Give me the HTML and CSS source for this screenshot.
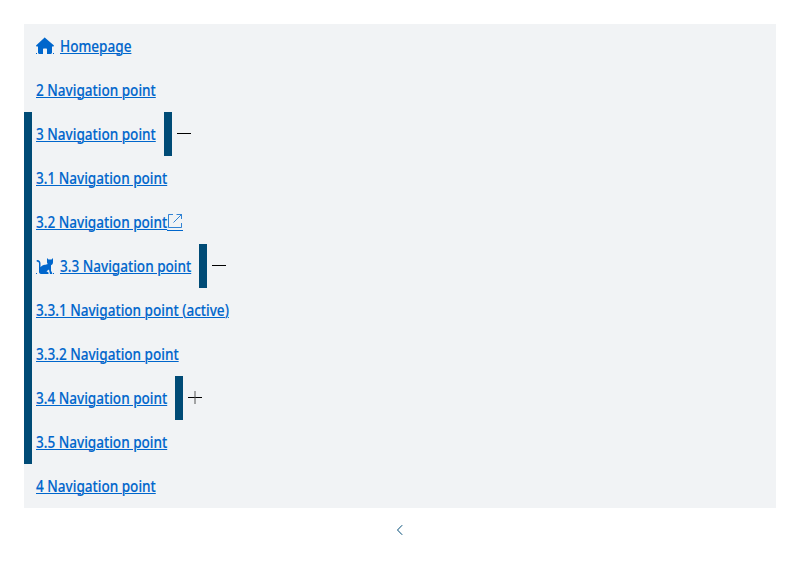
FILE: index.html
```html
<!DOCTYPE html>
<html lang="en">
<head>
<meta charset="utf-8">
<title>Navigation</title>
<link rel="stylesheet" href="styles.css">
</head>
<body>
<nav>
<ul class="tree">
<li><div class="row"><a href="#"><span class="icon"><svg width="18" height="18" viewBox="0 0 18 18"><path fill="currentColor" d="M9 .7 17.700 8.300c.5.5.2 1.100-.4 1.100H16v6.200c0 .8-.5 1.300-1.300 1.300H11v-4.400c0-.6-.4-1-1-1H8c-.6 0-1 .4-1 1v4.400H3.300c-.8 0-1.300-.5-1.300-1.300V9.400H.7c-.6 0-.9-.6-.4-1.100L8.100 1c.5-.4.900-.5 1-.3zM0 16h1v1H0zM17 16h1v1h-1z"/></svg></span><span class="label">Homepage</span></a></div></li>
<li><div class="row"><a href="#"><span class="label">2 Navigation point</span></a></div></li>
<li class="open">
<div class="row"><a href="#"><span class="label">3 Navigation point</span></a><button class="toggle" aria-label="Collapse"><svg width="14" height="14"><path d="M0 6.500h14"/></svg></button></div>
<ul class="nested">
<li><div class="row"><a href="#"><span class="label">3.1 Navigation point</span></a></div></li>
<li><div class="row"><a href="#"><span class="label">3.2 Navigation point</span><span class="external"><svg width="16" height="16" viewBox="0 0 16 16"><path fill="none" stroke="currentColor" stroke-width=".8" d="M6 .5H1.500v13h13V9M9.500.5h5V5M14.500.5 6.500 8.500"/></svg></span></a></div></li>
<li>
<div class="row"><a href="#"><span class="icon"><svg width="18" height="18" viewBox="0 0 18 18"><path fill="currentColor" d="M11 1 12.500 2.500h3L17 1v4.200c0 1.500-.8 2.600-2 3v5.500l1.200 2.300v1h-2.200l-1-4.500-2.500 1.800 2 1.200V17H4.800C3.300 16.700 2.800 15.500 3 14V6.500C3 5.300 2.500 4.800 1.300 4.700c-1 0-1-1.700 0-1.700C3.400 3 4.500 4.300 4.500 6.300v3.900C5.700 8.500 7.500 7.600 9.500 7.800l2.300-.8C11.200 6.500 11 6 11 5.300zM0 16h1v1H0zM17 16h1v1h-1z"/></svg></span><span class="label">3.3 Navigation point</span></a><button class="toggle" aria-label="Collapse"><svg width="14" height="14"><path d="M0 6.500h14"/></svg></button></div>
<ul>
<li><div class="row"><a href="#" aria-current="page"><span class="label">3.3.1 Navigation point (active)</span></a></div></li>
<li><div class="row"><a href="#"><span class="label">3.3.2 Navigation point</span></a></div></li>
</ul>
</li>
<li><div class="row"><a href="#"><span class="label">3.4 Navigation point</span></a><button class="toggle" aria-label="Expand"><svg width="14" height="14"><path d="M0 6.500h14"/><path d="M7 0v13"/></svg></button></div></li>
<li><div class="row"><a href="#"><span class="label">3.5 Navigation point</span></a></div></li>
</ul>
</li>
<li><div class="row"><a href="#"><span class="label">4 Navigation point</span></a></div></li>
</ul>
<button class="back" aria-label="Back"><svg width="8" height="12" viewBox="0 0 8 12"><path d="M6.200 1.200 1.500 6l4.700 4.800"/></svg></button>
</nav>
</body>
</html>
```
FILE: styles.css
```css
body {
  margin: 0;
  padding: 24px;
  background: #fff;
  font: 500 15.5px/24px "Noto Sans", sans-serif;
}
ul {
  margin: 0;
  padding: 0;
  list-style: none;
}
.tree {
  background: #f1f3f5;
}
.row {
  display: flex;
  height: 44px;
  padding-left: 12px;
}
.open {
  background: linear-gradient(#004b76, #004b76) left / 8px 100% no-repeat;
}
a {
  display: flex;
  align-items: center;
  color: #0066cc;
  text-decoration: none;
}
/* Condensed lettering: the margin takes back the width the scale frees. */
.label {
  width: 137px;
  margin-right: -17px;
  text-decoration: underline 1px;
  text-underline-offset: 1px;
  white-space: nowrap;
  -webkit-text-stroke: 0.15px currentColor;
  transform: scaleX(0.875);
  transform-origin: left;
}
.nested .label {
  width: 150px;
  margin-right: -19px;
}
.icon {
  width: 18px;
  height: 18px;
  margin-right: 6px;
}
svg {
  display: block;
}
.external {
  height: 16px;
  padding-top: 1px;
  border-bottom: 1px solid currentColor;
}
.toggle {
  display: flex;
  align-items: center;
  width: 28px;
  margin: 0 0 0 8px;
  padding: 0 0 0 5px;
  border: 0;
  border-left: 8px solid #004b76;
  background: none;
}
.toggle path {
  fill: none;
  stroke: #000;
}
.toggle path + path {
  stroke: #555;
}
.back {
  display: block;
  margin: 16px auto 0;
  padding: 0;
  border: 0;
  background: none;
}
.back svg {
  position: relative;
  left: -0.5px;
}
.back path {
  fill: none;
  stroke: #004b76;
}
```
